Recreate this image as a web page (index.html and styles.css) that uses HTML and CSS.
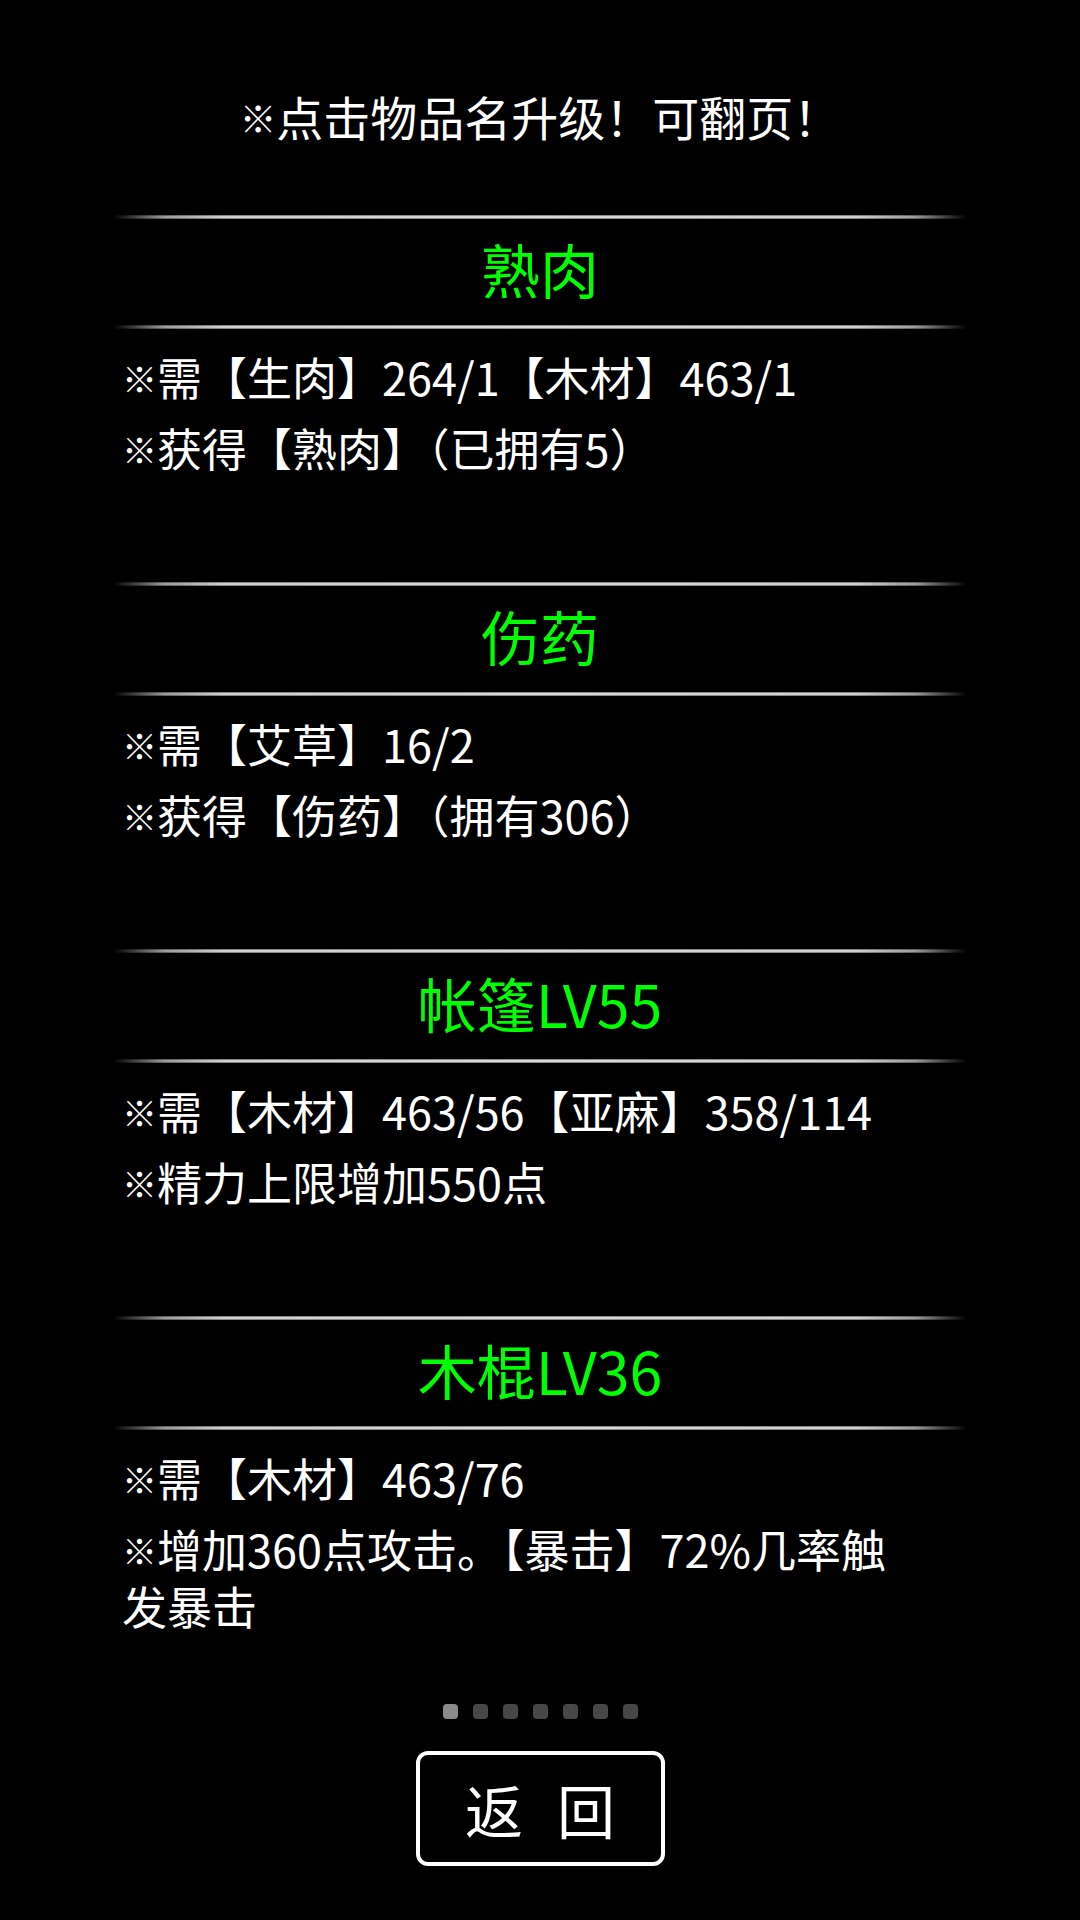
FILE: index.html
```html
<!DOCTYPE html>
<html lang="zh-CN">
<head>
<meta charset="utf-8">
<title>升级</title>
<link rel="stylesheet" href="styles.css">
</head>
<body>
<div class="page">
  <p class="note"><span class="rm">※</span>点击物品名升级！可翻页！</p>
  <div class="list">
    <section class="item">
      <div class="rule"></div>
      <h2 class="title">熟肉</h2>
      <div class="rule"></div>
      <div class="desc">
        <p><span class="rm">※</span>需【生肉】264/1【木材】463/1</p>
        <p><span class="rm">※</span>获得【熟肉】（已拥有5）</p>
      </div>
    </section>
    <section class="item">
      <div class="rule"></div>
      <h2 class="title">伤药</h2>
      <div class="rule"></div>
      <div class="desc">
        <p><span class="rm">※</span>需【艾草】16/2</p>
        <p><span class="rm">※</span>获得【伤药】（拥有306）</p>
      </div>
    </section>
    <section class="item">
      <div class="rule"></div>
      <h2 class="title">帐篷LV55</h2>
      <div class="rule"></div>
      <div class="desc">
        <p><span class="rm">※</span>需【木材】463/56【亚麻】358/114</p>
        <p><span class="rm">※</span>精力上限增加550点</p>
      </div>
    </section>
    <section class="item">
      <div class="rule"></div>
      <h2 class="title">木棍LV36</h2>
      <div class="rule"></div>
      <div class="desc">
        <p><span class="rm">※</span>需【木材】463/76</p>
        <p><span class="rm">※</span>增加360点攻击。【暴击】72%几率触发暴击</p>
      </div>
    </section>
  </div>
  <div class="dots">
    <span class="dot on"></span>
    <span class="dot"></span>
    <span class="dot"></span>
    <span class="dot"></span>
    <span class="dot"></span>
    <span class="dot"></span>
    <span class="dot"></span>
  </div>
  <div class="btn"><span>返</span><span>回</span></div>
</div>
</body>
</html>
```
FILE: styles.css
```css
html, body {
  margin: 0;
  padding: 0;
  background: #000;
}

body {
  font-family: "Noto Sans CJK SC", "Noto Sans", sans-serif;
  color: #fff;
}

.page {
  width: 1080px;
  height: 1920px;
  box-sizing: border-box;
  padding-top: 88px;
  display: flex;
  flex-direction: column;
  align-items: center;
}

.note {
  margin: 0 0 3px;
  font-size: 47px;
  line-height: 56px;
  height: 56px;
  white-space: nowrap;
}

.rm {
  font-size: 0.78em;
  vertical-align: 0.08em;
}

.list {
  width: 854px;
  margin-top: 68px;
}

.item {
  height: 367px;
  display: flex;
  flex-direction: column;
}

.rule {
  height: 4px;
  flex: none;
  background:
    linear-gradient(to bottom, rgba(0,0,0,0.55) 0%, rgba(0,0,0,0) 35%, rgba(0,0,0,0) 65%, rgba(0,0,0,0.55) 100%),
    linear-gradient(to right, rgba(200,200,200,0) 0%, #9a9a9a 6%, #cfcfcf 13%, #d8d8d8 50%, #cfcfcf 87%, #9a9a9a 94%, rgba(200,200,200,0) 100%);
}

.title {
  margin: 0;
  height: 106px;
  box-sizing: border-box;
  padding-bottom: 8px;
  flex: none;
  display: flex;
  align-items: center;
  justify-content: center;
  font-size: 59px;
  font-weight: 400;
  color: #00ff00;
}

.desc {
  flex: 1;
  padding: 20px 50px 0 9px;
  font-size: 45px;
  line-height: 56px;
}

.desc p {
  margin: 0 0 14px;
}

.dots {
  display: flex;
  gap: 15px;
  margin-top: 21px;
}

.dot {
  width: 15px;
  height: 15px;
  border-radius: 4px;
  background: #474747;
}

.dot.on {
  background: #8a8a8a;
}

.btn {
  margin-top: 32px;
  width: 249px;
  height: 115px;
  box-sizing: border-box;
  border: 4px solid #fff;
  border-radius: 12px;
  display: flex;
  align-items: center;
  justify-content: center;
  gap: 34px;
  font-size: 58px;
}
```
